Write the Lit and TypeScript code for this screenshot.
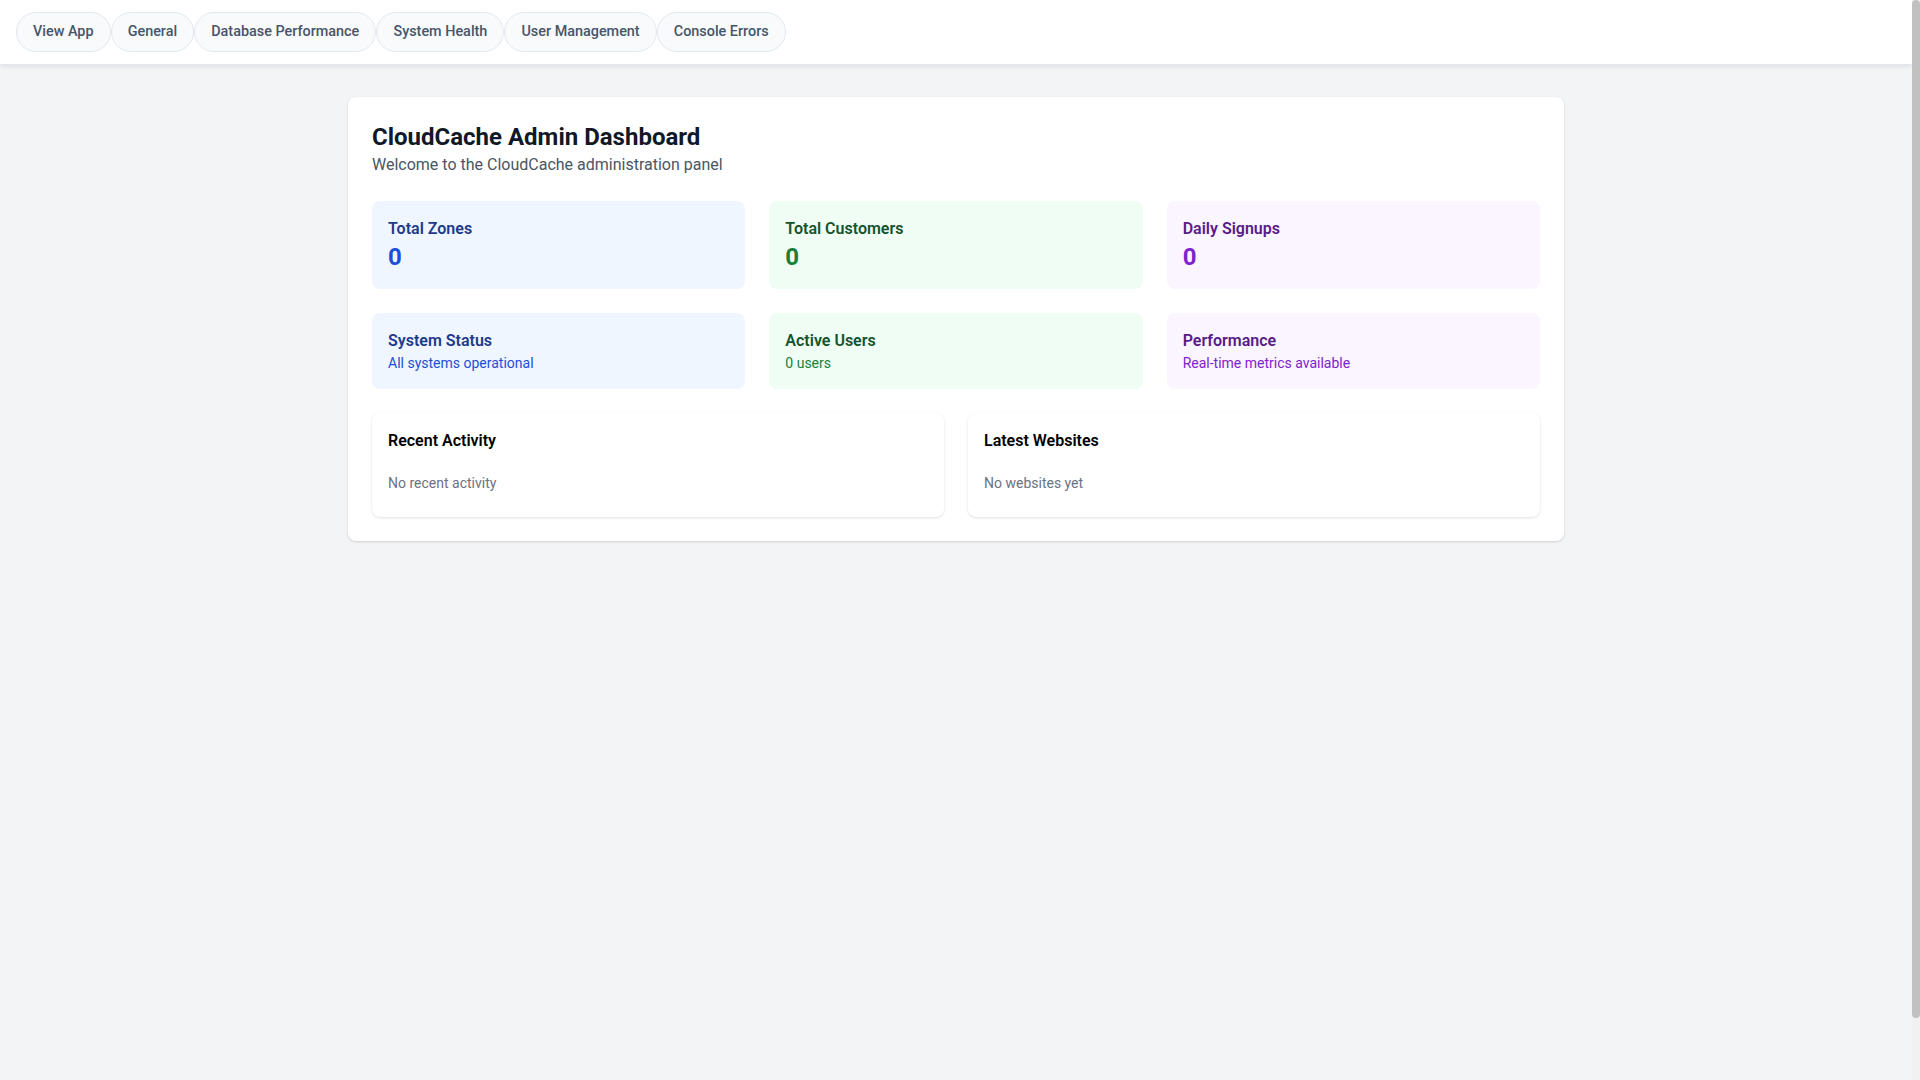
import { LitElement, html, css } from 'lit';
import { customElement } from 'lit/decorators.js';

const NAV_ITEMS = ['View App', 'General', 'Database Performance', 'System Health', 'User Management', 'Console Errors'];

const STATS = [
  { tone: 'blue', title: 'Total Zones', value: '0' },
  { tone: 'green', title: 'Total Customers', value: '0' },
  { tone: 'purple', title: 'Daily Signups', value: '0' },
];

const STATUS = [
  { tone: 'blue', title: 'System Status', text: 'All systems operational' },
  { tone: 'green', title: 'Active Users', text: '0 users' },
  { tone: 'purple', title: 'Performance', text: 'Real-time metrics available' },
];

const PANELS = [
  { title: 'Recent Activity', empty: 'No recent activity' },
  { title: 'Latest Websites', empty: 'No websites yet' },
];

@customElement('app-root')
export class AppRoot extends LitElement {
  static styles = css`
    :host {
      display: block;
      font-family: Roboto, 'Liberation Sans', sans-serif;
    }

    .viewport {
      display: flex;
      height: 100vh;
      overflow: hidden;
      background: #f3f4f6;
    }

    .page {
      flex: 1;
      min-width: 0;
    }

    /* the shot hides real scrollbars, so this one is drawn */
    .scrollbar {
      flex: none;
      width: 8px;
      background: #f1f1f1;
    }

    .scrollbar__thumb {
      height: 1018px;
      background: #c1c1c1;
      border-radius: 4px;
    }

    .nav {
      display: flex;
      gap: 0.1px;
      padding: 12px 16px;
      background: #fff;
      border-bottom: 1px solid #e2e8f0;
      box-shadow: 0 2px 4px rgba(0, 0, 0, 0.08);
    }

    .nav__item {
      padding: 8px 16px;
      font-size: 14.4px;
      font-weight: 500;
      line-height: 21.6px;
      color: #475569;
      background: #f8fafc;
      border: 1px solid #e2e8f0;
      border-radius: 9999px;
    }

    .main {
      width: 1216px;
      margin: 32px auto 0;
      padding: 24px;
      box-sizing: border-box;
      background: #fff;
      border-radius: 8px;
      box-shadow: 0 1px 3px rgba(0, 0, 0, 0.1), 0 1px 2px rgba(0, 0, 0, 0.06);
    }

    .title {
      margin: 0;
      font-size: 24px;
      font-weight: 700;
      line-height: 32px;
      color: #111827;
    }

    .subtitle {
      margin: 0 0 24px;
      font-size: 16px;
      line-height: 24px;
      color: #4b5563;
    }

    .grid {
      display: grid;
      grid-template-columns: repeat(3, 1fr);
      gap: 24px;
      margin-bottom: 24px;
    }

    .tile {
      padding: 16px;
      border-radius: 8px;
    }

    .tile__title {
      margin: 0;
      font-size: 16px;
      font-weight: 600;
      line-height: 24px;
    }

    .tile__value {
      margin: 0;
      font-size: 24px;
      font-weight: 700;
      line-height: 32px;
    }

    .tile__text {
      margin: 0;
      font-size: 14px;
      line-height: 20px;
    }

    .tile--blue { background: #eff6ff; }
    .tile--blue .tile__title { color: #1e3a8a; }
    .tile--blue .tile__value, .tile--blue .tile__text { color: #1d4ed8; }

    .tile--green { background: #f0fdf4; }
    .tile--green .tile__title { color: #14532d; }
    .tile--green .tile__value, .tile--green .tile__text { color: #15803d; }

    .tile--purple { background: #faf5ff; }
    .tile--purple .tile__title { color: #581c87; }
    .tile--purple .tile__value, .tile--purple .tile__text { color: #7e22ce; }

    .panels {
      display: grid;
      grid-template-columns: repeat(2, 1fr);
      gap: 24px;
    }

    .panel {
      padding: 16px;
      background: #fff;
      border-radius: 8px;
      box-shadow: 0 1px 3px rgba(0, 0, 0, 0.1), 0 1px 2px rgba(0, 0, 0, 0.03);
    }

    .panel__title {
      margin: 0 0 12px;
      font-size: 16px;
      font-weight: 600;
      line-height: 24px;
      color: #000;
    }

    .panel__empty {
      margin: 0;
      padding: 8px 0;
      font-size: 14px;
      line-height: 20px;
      color: #6b7280;
    }
  `;

  render() {
    return html`
      <div class="viewport">
        <div class="page">
          <nav class="nav">
            ${NAV_ITEMS.map((item) => html`<div class="nav__item">${item}</div>`)}
          </nav>
          <main class="main">
            <h1 class="title">CloudCache Admin Dashboard</h1>
            <p class="subtitle">Welcome to the CloudCache administration panel</p>
            <div class="grid">
              ${STATS.map((stat) => html`
                <div class="tile tile--${stat.tone}">
                  <h3 class="tile__title">${stat.title}</h3>
                  <p class="tile__value">${stat.value}</p>
                </div>
              `)}
            </div>
            <div class="grid">
              ${STATUS.map((item) => html`
                <div class="tile tile--${item.tone}">
                  <h3 class="tile__title">${item.title}</h3>
                  <p class="tile__text">${item.text}</p>
                </div>
              `)}
            </div>
            <div class="panels">
              ${PANELS.map((panel) => html`
                <div class="panel">
                  <h3 class="panel__title">${panel.title}</h3>
                  <p class="panel__empty">${panel.empty}</p>
                </div>
              `)}
            </div>
          </main>
        </div>
        <div class="scrollbar"><div class="scrollbar__thumb"></div></div>
      </div>
    `;
  }
}
